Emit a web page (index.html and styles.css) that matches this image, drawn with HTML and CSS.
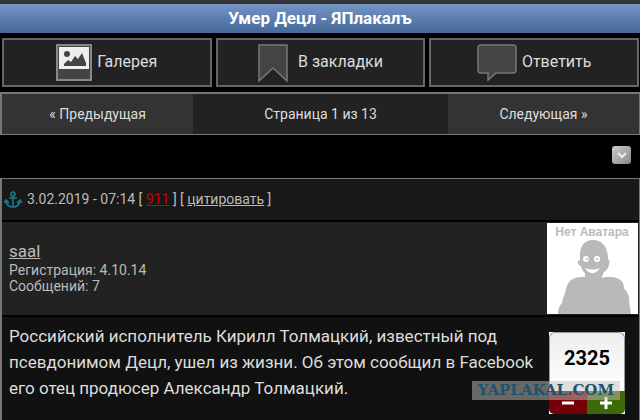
FILE: index.html
```html
<!DOCTYPE html>
<html lang="ru">
<head>
  <meta charset="UTF-8">
  <title>Умер Децл - ЯПлакалъ</title>
  <meta name="viewport" content="width=device-width, initial-scale=1.0">
  <link rel="stylesheet" href="styles.css">
</head>
<body>
  <header class="title-bar">
    <h1>Умер Децл - ЯПлакалъ</h1>
  </header>

  <div class="actions">
    <button class="action" type="button">
      <svg width="36" height="37" viewBox="0 0 36 37">
        <rect x="1" y="1" width="34" height="35" fill="#444" stroke="#888" stroke-width="2"/>
        <rect x="3" y="3" width="30" height="22" fill="#eee"/>
        <circle cx="11" cy="10" r="3" fill="#444"/>
        <path d="M8 22V20L12 16L15 18L19 12L22 15L26 9L30 19V22Z" fill="#444"/>
      </svg>
      <span>Галерея</span>
    </button>
    <button class="action bookmark" type="button">
      <svg width="30" height="38" viewBox="0 0 30 38">
        <path d="M1 1H29V37L15 24L1 37Z" fill="#444" stroke="#777" stroke-width="1.5"/>
      </svg>
      <span>В закладки</span>
    </button>
    <button class="action" type="button">
      <svg width="40" height="38" viewBox="0 0 40 38">
        <path d="M4 1H36Q39 1 39 4V26Q39 29 36 29H19L11 36V29H4Q1 29 1 26V4Q1 1 4 1Z" fill="#444" stroke="#777" stroke-width="1.5"/>
      </svg>
      <span>Ответить</span>
    </button>
  </div>

  <nav class="pages">
    <a class="page-link" href="#">« Предыдущая</a>
    <span class="page-now">Страница 1 из 13</span>
    <a class="page-link" href="#">Следующая »</a>
  </nav>

  <div class="tools">
    <button class="down" type="button" aria-label="Вниз">
      <svg width="12" height="8" viewBox="0 0 12 8">
        <path d="M2 2L6 6L10 2" fill="none" stroke="#eee" stroke-width="2"/>
      </svg>
    </button>
  </div>

  <article class="post">
    <div class="post-head">
      <svg width="18" height="18" viewBox="0 0 18 18" fill="none" stroke="#137b91" stroke-width="1.6">
        <circle cx="9" cy="3" r="2"/>
        <path d="M9 5V16M5 7H13M2 10Q3 16 9 16Q15 16 16 10M0 12L2 9L5 12M13 12L16 9L18 12"/>
      </svg>
      <span>3.02.2019 - 07:14 [ <a class="report" href="#">911</a> ] [ <a href="#">цитировать</a> ]</span>
    </div>
    <div class="author">
      <div class="author-info">
        <a class="nick" href="#">saal</a>
        <div>Регистрация: 4.10.14</div>
        <div>Сообщений: 7</div>
      </div>
      <svg class="avatar" width="91" height="91" viewBox="0 0 91 91">
        <rect width="91" height="91" fill="#fff"/>
        <text x="45" y="13" text-anchor="middle">Нет Аватара</text>
        <path d="M46 17C56 17 61 25 61 36Q64 37 61 45Q59 48 57 49Q55 53 55 55Q64 52 72 56Q77 59 77 65Q83 72 82 78L84 91H11Q11 84 15 80Q16 74 18 70Q20 60 24 57Q31 53 38 54V50Q35 48 34 43Q30 42 31 38L33 37C32 25 36 17 46 17Z" fill="#b9b9b9"/>
        <circle cx="39" cy="36" r="3" fill="#fff"/>
        <circle cx="50" cy="36" r="3" fill="#fff"/>
        <circle cx="40" cy="36" r="1" fill="#b9b9b9"/>
        <circle cx="50" cy="36" r="1" fill="#b9b9b9"/>
        <path d="M38 45Q45 48 53 45Q49 51 45 50Q41 50 38 45Z" fill="#fff"/>
      </svg>
    </div>
    <div class="post-body">
      <p>Российский исполнитель Кирилл Толмацкий, известный под псевдонимом Децл, ушел из жизни. Об этом сообщил в Facebook его отец продюсер Александр Толмацкий.</p>
      <div class="rating">
        <div class="score">2325</div>
        <div class="votes">
          <button class="minus" type="button" aria-label="Минус">
            <svg width="12" height="12" viewBox="0 0 12 12"><path d="M0 6H12" stroke="#fff" stroke-width="3"/></svg>
          </button>
          <button class="plus" type="button" aria-label="Плюс">
            <svg width="12" height="12" viewBox="0 0 12 12"><path d="M0 6H12M6 0V12" stroke="#fff" stroke-width="3"/></svg>
          </button>
        </div>
      </div>
    </div>
  </article>

  <div class="watermark">YAPLAKAL.COM</div>
</body>
</html>
```

FILE: styles.css
```css
* {
  box-sizing: border-box;
}
body {
  margin: 0;
  min-height: 100vh;
  display: flex;
  flex-direction: column;
  background: #000;
  border-top: 4px solid #333;
  color: #bbb;
  font-family: Roboto, "Liberation Sans", sans-serif;
  font-size: 14px;
  overflow: hidden;
}
a {
  color: inherit;
}
button {
  margin: 0;
  padding: 0;
  border: 0;
  font-family: inherit;
}
.title-bar {
  background: linear-gradient(#7594c4, #446998);
}
h1 {
  margin: 0;
  color: #fff;
  font-size: 17px;
  line-height: 29px;
  text-align: center;
}
.actions {
  display: flex;
  gap: 4px;
  padding: 5px 1px 5px 2px;
}
.action {
  flex: 1;
  height: 49px;
  display: flex;
  align-items: center;
  justify-content: center;
  gap: 5px;
  background: #222;
  border: 2px solid #666;
  color: #ddd;
  font-size: 16px;
  line-height: 20px;
}
.action span {
  padding-bottom: 2px;
}
.bookmark {
  gap: 10px;
}
.pages {
  display: grid;
  grid-template-columns: 3fr 4fr 3fr;
  border: 1px solid #777;
  border-width: 2px 1px 1px 2px;
  background: #222;
  color: #ddd;
  line-height: 40px;
  text-align: center;
}
.page-link {
  background: #333;
  text-decoration: none;
}
.tools {
  display: flex;
  justify-content: flex-end;
  padding: 11px 9px 14px;
}
.down {
  width: 19px;
  height: 18px;
  display: flex;
  align-items: center;
  justify-content: center;
  border-radius: 3px;
  background: linear-gradient(135deg, #ccc, #888);
}
.post {
  flex: 1;
  display: flex;
  flex-direction: column;
  border: 1px solid #777;
  border-width: 1px 1px 0 2px;
  background: #111;
}
.post-head {
  display: flex;
  align-items: center;
  gap: 5px;
  padding-left: 2px;
  line-height: 41px;
  background: #181818;
  border-bottom: 2px solid #000;
}
.report {
  color: #c00;
}
.author {
  display: flex;
  align-items: center;
  justify-content: space-between;
  padding: 1px 1px 1px 7px;
  background: #222;
  border-bottom: 2px solid #000;
  line-height: 16px;
}
.author-info {
  padding-bottom: 4px;
}
.nick {
  font-size: 17px;
  line-height: 22px;
}
.avatar text {
  fill: #bbb;
  font: bold 12px "Liberation Sans", sans-serif;
}
.post-body {
  display: flex;
  justify-content: space-between;
  gap: 8px;
  padding: 6px 14px 6px 7px;
  color: #ddd;
  font-size: 17px;
  line-height: 26px;
}
.post-body p {
  margin: 0;
}
.rating {
  flex: none;
  width: 76px;
  margin-top: 9px;
  background: #fff;
}
.score {
  border: 1px solid #999;
  border-bottom: 0;
  border-radius: 6px 6px 0 0;
  background: linear-gradient(#eee, #fff);
  color: #000;
  font-size: 20px;
  font-weight: bold;
  line-height: 50px;
  padding-bottom: 8px;
  text-align: center;
}
.votes {
  display: flex;
}
.votes button {
  flex: 1;
  height: 23px;
  display: flex;
  align-items: center;
  justify-content: center;
}
.minus {
  background: #760007;
  border-bottom-left-radius: 5px;
}
.plus {
  background: #3d6908;
  border-bottom-right-radius: 5px;
}
.watermark {
  position: absolute;
  right: 20px;
  bottom: 20px;
  padding: 0 6px;
  background: rgba(200, 190, 180, 0.5);
  color: #1d5370;
  font: bold 15px/19px "DejaVu Serif", serif;
  pointer-events: none;
}
```
